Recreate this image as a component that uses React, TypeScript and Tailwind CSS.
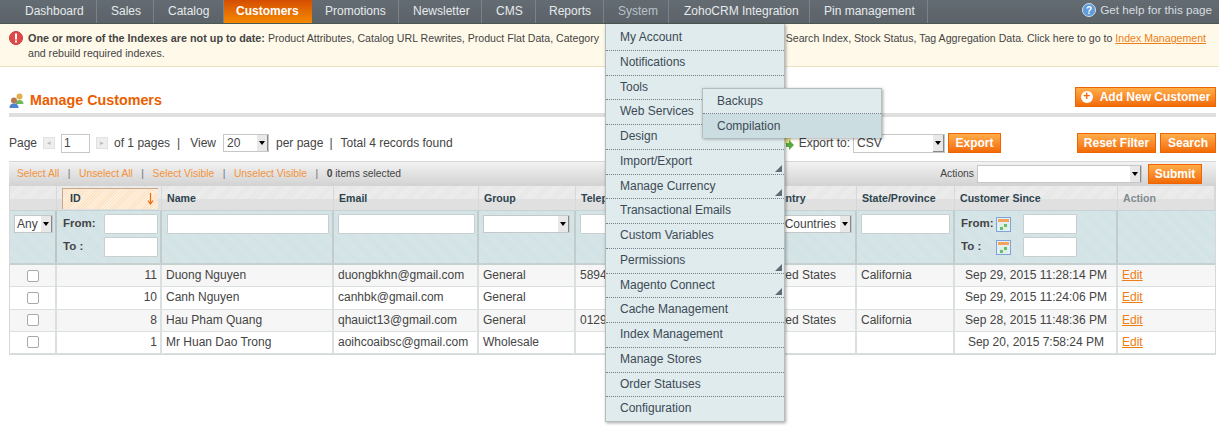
import React from "react";

const nav: [string, string][] = [
  ["Dashboard", "w-[97px] pl-[25px]"],
  ["Sales", "w-[57px] pl-[14px]"],
  ["Catalog", "w-[70px] pl-[14px]"],
  ["Customers", "w-[88px] pl-[12px]"],
  ["Promotions", "w-[87px] pl-[13px]"],
  ["Newsletter", "w-[83px] pl-[14px]"],
  ["CMS", "w-[54px] pl-[14px]"],
  ["Reports", "w-[68px] pl-[13px]"],
  ["System", "w-[65px] pl-[14px]"],
  ["ZohoCRM Integration", "w-[141px] pl-[15px]"],
  ["Pin management", "w-[118px] pl-[14px]"],
];

const menu: [string, boolean][] = [
  ["My Account", false], ["Notifications", false], ["Tools", false], ["Web Services", false],
  ["Design", false], ["Import/Export", true], ["Manage Currency", true], ["Transactional Emails", false],
  ["Custom Variables", false], ["Permissions", true], ["Magento Connect", true], ["Cache Management", false],
  ["Index Management", false], ["Manage Stores", false], ["Order Statuses", false], ["Configuration", false],
];

const rows = [
  ["11", "Duong Nguyen", "duongbkhn@gmail.com", "General", "5894", "United States", "California", "Sep 29, 2015 11:28:14 PM"],
  ["10", "Canh Nguyen", "canhbk@gmail.com", "General", "", "", "", "Sep 29, 2015 11:24:06 PM"],
  ["8", "Hau Pham Quang", "qhauict13@gmail.com", "General", "0129", "United States", "California", "Sep 28, 2015 11:48:36 PM"],
  ["1", "Mr Huan Dao Trong", "aoihcoaibsc@gmail.com", "Wholesale", "", "", "", "Sep 20, 2015 7:58:24 PM"],
];

const btn = "h-[20px] border border-[#ed6502] bg-gradient-to-b from-[#ffac47] to-[#f26a00] text-white font-bold text-[12px] leading-[18px] text-center";
const input = "block h-[20px] bg-white border border-[#c8cfcf] rounded-[1px]";
const hatch = "bg-[repeating-linear-gradient(135deg,#e6e6e6_0px,#e6e6e6_1px,#eeeeee_1px,#eeeeee_2px)]";
const dots = "bg-[repeating-linear-gradient(45deg,#d0e2e5_0px,#d0e2e5_1px,#d8e6e8_1px,#d8e6e8_2px)]";

function Sel({ className, text }: { className: string; text?: string }) {
  return (
    <div className={`flex items-center justify-between bg-white border border-[#c4c8c8] h-[19px] text-[12px] text-[#444] pl-[3px] overflow-hidden ${className}`}>
      <span className="whitespace-nowrap">{text}</span>
      <span className="w-[11px] h-[17px] shrink-0 bg-[#e8e8e8] border-r border-b border-[#888] flex items-center justify-center">
        <span className="w-0 h-0 border-x-[3px] border-x-transparent border-t-[4px] border-t-black" />
      </span>
    </div>
  );
}

function Th({ w, children, cls = "text-[#2d444f]" }: { w: string; children?: React.ReactNode; cls?: string }) {
  return (
    <div className={`${w} shrink-0 h-full border-r border-[#d5d9d9] relative`}>
      <div className={`h-[13px] ${hatch}`} />
      <div className="h-[11px] bg-[#e0e0e0]" />
      <div className={`absolute left-[5px] top-[5px] text-[10.6px] font-bold leading-[14px] whitespace-nowrap ${cls}`}>{children}</div>
    </div>
  );
}

function Cal() {
  return (
    <svg width="15" height="15" viewBox="0 0 15 15" className="shrink-0">
      <rect x="0.5" y="0.5" width="14" height="14" fill="#e4eef7" stroke="#7ea3d9" />
      <rect x="2" y="2" width="11" height="3" fill="#f7a25a" />
      <rect x="3" y="6.500" width="9" height="6.500" fill="#dfeee6" />
      <rect x="8" y="7" width="3" height="3" fill="#62c06c" />
      <rect x="4" y="10" width="3" height="3" fill="#62c06c" />
    </svg>
  );
}

export default function App() {
  return (
    <div className="relative w-[1219px] h-[442px] overflow-hidden bg-white text-[12px] text-[#444] font-['Liberation_Sans',Arial,sans-serif]">
      {/* top nav */}
      <div className="h-[24px] flex bg-gradient-to-b from-[#646c73] to-[#5b6268] border-b border-[#4a5a52] relative">
        {nav.map(([t, c]) => (
          <div
            key={t}
            className={`${c} shrink-0 h-[23px] leading-[22px] border-r border-[#7b8288] whitespace-nowrap ${
              t === "Customers"
                ? "font-bold text-white bg-gradient-to-b from-[#d44d02] to-[#f58a00] border-r-0"
                : t === "System"
                ? "text-[#b9c1c7]"
                : "text-[#e6eaec]"
            }`}
          >
            {t}
          </div>
        ))}
        <div className="ml-auto mr-[7px] flex items-center gap-[4px] h-[20px] text-[11.7px] text-[#d8dde1]">
          <svg width="14" height="14" viewBox="0 0 14 14">
            <circle cx="7" cy="7" r="6.5" fill="#5e9bd8" stroke="#cfe0f2" />
            <text x="7" y="10.5" textAnchor="middle" fontSize="10" fontWeight="700" fill="#fff" fontFamily="Liberation Sans">?</text>
          </svg>
          <span>Get help for this page</span>
        </div>
      </div>

      {/* notice */}
      <div className="h-[43px] bg-[#fff9e9] border-b border-[#eee2be] pl-[28px] pr-[13px] pt-[7px] leading-[15px] text-[10.6px] text-[#444] relative">
        <svg width="14" height="14" viewBox="0 0 14 14" className="absolute left-[9px] top-[7px]">
          <circle cx="7" cy="7" r="6.5" fill="#e0484a" stroke="#c53a3c" />
          <rect x="6" y="2.5" width="2" height="6" fill="#fff" />
          <rect x="6" y="9.5" width="2" height="2" fill="#fff" />
        </svg>
        <div className="whitespace-nowrap flex justify-between">
          <span><b className="text-[10.8px]">One or more of the Indexes are not up to date:</b> Product Attributes, Catalog URL Rewrites, Product Flat Data, Category</span>
          <span>Search Index, Stock Status, Tag Aggregation Data. Click here to go to <span className="text-[#ee7e14] underline">Index Management</span></span>
        </div>
        <div>and rebuild required indexes.</div>
      </div>

      <div className="px-[9px] pr-[3px]">
        {/* title */}
        <div className="h-[50px] border-b-[4px] border-[#dfdfdf] flex justify-between items-start pt-[24px]">
          <div className="flex items-center gap-[5px] h-[20px]">
            <svg width="16" height="16" viewBox="0 0 16 16">
              <circle cx="10.5" cy="3.5" r="3" fill="#e2b04a" />
              <path d="M6.5 11c0-3 2-4 4-4s4 1 4 4z" fill="#6cb65c" />
              <circle cx="5" cy="7.5" r="3" fill="#b87a4a" />
              <path d="M0.5 15c0-3.5 2-4.5 4.500-4.500s4.500 1 4.500 4.500z" fill="#4d86cf" />
            </svg>
            <span className="text-[14.3px] font-bold text-[#eb5e00]">Manage Customers</span>
          </div>
          <div className={`${btn} w-[141px] flex items-center justify-center gap-[7px] -mt-[4px]`}>
            <span className="w-[12px] h-[12px] rounded-full bg-white text-[#f26a00] text-[12px] leading-[11px]">+</span>
            <span>Add New Customer</span>
          </div>
        </div>

        {/* pager */}
        <div className="h-[44px] pt-[8px] flex items-center relative">
          <span>Page</span>
          <span className="ml-[6px] w-[12px] h-[12px] bg-[#eee] border border-[#e2e2e2] text-[7px] leading-[10px] text-center text-[#bbb]">◂</span>
          <span className="ml-[6px] w-[29px] h-[19px] border border-[#c4c8c8] pl-[2px] leading-[17px]">1</span>
          <span className="ml-[6px] w-[12px] h-[12px] bg-[#eee] border border-[#e2e2e2] text-[7px] leading-[10px] text-center text-[#bbb]">▸</span>
          <span className="ml-[6px]">of 1 pages</span>
          <span className="ml-[7px]">|</span>
          <span className="ml-[10px]">View</span>
          <Sel className="ml-[7px] w-[46px] !h-[18px]" text="20" />
          <span className="ml-[7px]">per page</span>
          <span className="ml-[6px]">|</span>
          <span className="ml-[8px]">Total 4 records found</span>
          <div className="ml-auto flex items-center">
            <svg width="12" height="14" viewBox="0 0 12 14" className="mr-[5px]">
              <rect x="1" y="1" width="8" height="7" fill="#ece28a" />
              <path d="M4 7h3V4l5 5-5 5v-3H4z" fill="#58a83e" />
            </svg>
            <span>Export to:</span>
            <Sel className="ml-[3px] w-[92px]" text="CSV" />
            <div className={`${btn} ml-[3px] w-[53px]`}>Export</div>
            <div className={`${btn} ml-[76px] w-[79px]`}>Reset Filter</div>
            <div className={`${btn} ml-[4px] w-[56px]`}>Search</div>
          </div>
        </div>

        {/* massaction */}
        <div className="h-[25px] bg-gradient-to-b from-[#f2f2f2] to-[#d2d2d2] border-t border-[#d8d8d8] flex items-center pl-[8px] text-[10.3px] text-[#f4933a]">
          <span>Select All</span>
          <span className="mx-[8.500px] text-[#66707a]">|</span>
          <span>Unselect All</span>
          <span className="mx-[8.500px] text-[#66707a]">|</span>
          <span>Select Visible</span>
          <span className="mx-[8.500px] text-[#66707a]">|</span>
          <span>Unselect Visible</span>
          <span className="mx-[8.500px] text-[#66707a]">|</span>
          <span className="text-[#444]"><b>0</b> items selected</span>
          <div className="ml-auto flex items-center text-[#444] pr-[14px]">
            <span className="mr-[3px]">Actions</span>
            <Sel className="w-[165px] !h-[18px]" />
            <div className={`${btn} ml-[6px] w-[54px]`}>Submit</div>
          </div>
        </div>

        {/* table */}
        <div className="w-[1207px] border-x border-b border-[#d5d9d9]">
          <div className="h-[24px] flex">
            <Th w="w-[47px]" />
            <div className="relative w-[105px] shrink-0">
              <Th w="w-full h-full" />
              <div className="absolute left-[5px] right-[4px] top-[2px] bottom-[1px] border-l border-t border-[#c7a98a] bg-[repeating-linear-gradient(135deg,#fde3c6_0px,#fde3c6_1px,#fff0dd_1px,#fff0dd_2px)] text-[10.6px] font-bold text-[#2d444f] leading-[19px] pl-[7px]">
                ID
                <svg width="7" height="12" viewBox="0 0 7 12" className="absolute right-[4px] top-[4px]">
                  <path d="M3.500 0v10M1 7.500l2.500 3.500 2.500-3.500" stroke="#ec6a10" strokeWidth="1.200" fill="none" />
                </svg>
              </div>
            </div>
            <Th w="w-[172px]">Name</Th>
            <Th w="w-[145px]">Email</Th>
            <Th w="w-[97px]">Group</Th>
            <Th w="w-[184px]">Telephone</Th>
            <Th w="w-[97px]">Country</Th>
            <Th w="w-[98px]">State/Province</Th>
            <Th w="w-[163px]">Customer Since</Th>
            <Th w="flex-1" cls="text-[#808a8f]">Action</Th>
          </div>
          <div className={`h-[55px] flex ${dots} border-t border-[#c7d2d2] border-b-2 border-b-[#c7d0d0]`}>
            <div className="w-[47px] shrink-0 border-r-2 border-[#bcc6c6] pl-[4px] pt-[4px]">
              <Sel className="w-[39px] !h-[18px] !pl-[2px]" text="Any" />
            </div>
            <div className="w-[105px] shrink-0 border-r-2 border-[#c3cccc] pl-[6px] pt-[3px] font-bold text-[11.5px] text-[#444]">
              <div className="flex h-[20px] items-center justify-between pr-[2px]"><span>From:</span><div className={`${input} w-[54px]`} /></div>
              <div className="flex h-[20px] mt-[3px] items-center justify-between pr-[2px]"><span>To :</span><div className={`${input} w-[54px]`} /></div>
            </div>
            <div className="w-[172px] shrink-0 border-r-2 border-[#c3cccc] pl-[5px] pr-[3px] pt-[3px]"><div className={`${input} w-full`} /></div>
            <div className="w-[145px] shrink-0 border-r-2 border-[#c3cccc] pl-[4px] pr-[2px] pt-[3px]"><div className={`${input} w-full`} /></div>
            <div className="w-[97px] shrink-0 border-r-2 border-[#c3cccc] px-[4px] pt-[4px]"><Sel className="w-full !h-[18px]" /></div>
            <div className="w-[184px] shrink-0 border-r-2 border-[#c3cccc] px-[4px] pt-[3px]"><div className={`${input} w-full`} /></div>
            <div className="w-[97px] shrink-0 border-r-2 border-[#c3cccc] pl-[4px] pr-[3px] pt-[4px]"><Sel className="w-full !h-[18px]" text="All Countries" /></div>
            <div className="w-[98px] shrink-0 border-r-2 border-[#c3cccc] pl-[4px] pr-[3px] pt-[3px]"><div className={`${input} w-full`} /></div>
            <div className="w-[163px] shrink-0 border-r-2 border-[#c3cccc] pl-[6px] pt-[3px] font-bold text-[11.5px] text-[#444]">
              <div className="flex h-[20px] items-center"><span className="w-[35px]">From:</span><Cal /><div className={`${input} w-[54px] ml-[12px]`} /></div>
              <div className="flex h-[20px] mt-[3px] items-center"><span className="w-[35px]">To :</span><Cal /><div className={`${input} w-[54px] ml-[12px]`} /></div>
            </div>
            <div className="flex-1" />
          </div>
          {rows.map((r, i) => (
            <div key={r[0]} className={`h-[22.250px] flex items-center leading-[21px] border-b border-[#dadfdf] ${i % 2 === 0 ? "bg-[#f6f6f6]" : "bg-white"}`}>
              <div className="w-[47px] h-full shrink-0 border-r-2 border-[#dadfdf] flex items-center justify-center">
                <span className="w-[12px] h-[12px] rounded-[2px] bg-white border border-[#a9a9a9] block" />
              </div>
              <div className="w-[105px] h-full shrink-0 border-r-2 border-[#dadfdf] text-right pr-[3px]">{r[0]}</div>
              <div className="w-[172px] h-full shrink-0 border-r-2 border-[#dadfdf] pl-[4px]">{r[1]}</div>
              <div className="w-[145px] h-full shrink-0 border-r-2 border-[#dadfdf] pl-[4px] whitespace-nowrap">{r[2]}</div>
              <div className="w-[97px] h-full shrink-0 border-r-2 border-[#dadfdf] pl-[4px]">{r[3]}</div>
              <div className="w-[184px] h-full shrink-0 border-r-2 border-[#dadfdf] pl-[4px] whitespace-nowrap">{r[4]}</div>
              <div className="w-[97px] h-full shrink-0 border-r-2 border-[#dadfdf] pl-[4px] whitespace-nowrap">{r[5]}</div>
              <div className="w-[98px] h-full shrink-0 border-r-2 border-[#dadfdf] pl-[4px]">{r[6]}</div>
              <div className="w-[163px] h-full shrink-0 border-r-2 border-[#dadfdf] text-center whitespace-nowrap pl-[1px]">{r[7]}</div>
              <div className="flex-1 pl-[4px] text-[#ee7e14] underline">Edit</div>
            </div>
          ))}
        </div>
      </div>

      {/* System dropdown */}
      <div className="absolute left-[605px] top-[24px] w-[180px] h-[398px] pt-[2px] bg-[#e0ebed] border-x border-b border-[#b5bdbd] shadow-[1px_1px_3px_rgba(0,0,0,0.35)] flex flex-col">
        {menu.map(([t, arrow], i) => (
          <div key={t} className={`relative flex-1 pl-[14px] leading-[23px] whitespace-nowrap text-[#3c4a55] ${i < menu.length - 1 ? "border-b border-dotted border-[#75808a]" : ""}`}>
            {t}
            {arrow && (
              <svg width="7" height="7" viewBox="0 0 7 7" className="absolute right-[2px] bottom-[2px]">
                <path d="M7 0v7H0z" fill="#5f6d78" />
              </svg>
            )}
          </div>
        ))}
      </div>
      <div className="absolute left-[702px] top-[88px] w-[180px] h-[50px] bg-[#e0ebed] border border-[#b5bdbd] shadow-[1px_1px_3px_rgba(0,0,0,0.35)] flex flex-col">
        <div className="flex-1 pl-[14px] leading-[24px] border-b border-dotted border-[#75808a] text-[#3c4a55]">Backups</div>
        <div className="flex-1 pl-[14px] leading-[24px] bg-[#ccdde1] text-[#3c4a55]">Compilation</div>
      </div>
    </div>
  );
}
